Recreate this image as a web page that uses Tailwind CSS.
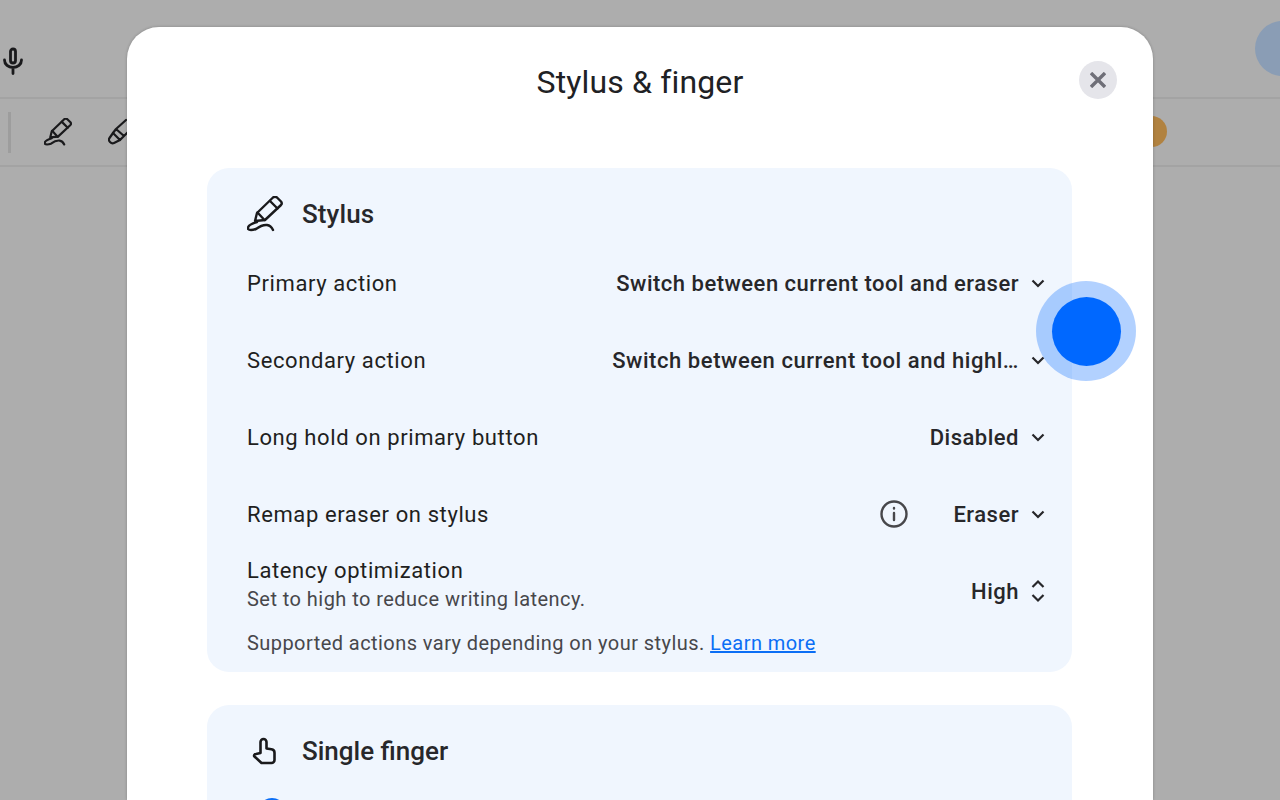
<!DOCTYPE html>
<html lang="en">

<head>
    <meta charset="UTF-8" />
    <meta name="viewport" content="width=device-width, initial-scale=1.0" />
    <title>Stylus &amp; finger</title>
    <script src="https://cdn.jsdelivr.net/npm/@tailwindcss/browser@4"></script>
</head>

<body class="bg-[#adadad] text-[#1f1f21] font-['Roboto',sans-serif] h-[800px] w-[1280px] overflow-hidden relative">

    <!-- Page behind the dialog -->
    <header class="h-[99px] border-b-2 border-[#a3a3a3] flex items-center justify-between pl-[1px] pt-[25px]">
        <svg class="w-6 h-7 text-[#1a1a1c]" viewBox="0 0 24 28" fill="none" stroke="currentColor" stroke-width="2.800" stroke-linecap="round">
            <rect x="9.500" y="2" width="5" height="14" rx="2.500"></rect>
            <path d="M3.500 13c0 4.500 3.800 7.500 8.500 7.500s8.500-3 8.500-7.500M12 20.500v6"></path>
        </svg>
        <div class="w-[55px] h-[55px] rounded-full bg-[#8a9db5] -mr-[30px] -mt-[25px]"></div>
    </header>
    <div class="h-[68px] border-b-2 border-[#a3a3a3] flex items-center justify-between">
        <div class="flex items-center">
            <div class="w-[3px] h-[41px] bg-[#9d9d9d] ml-[8px]"></div>
            <svg class="w-[28px] h-[28px] ml-[33px] text-[#1a1a1c]" viewBox="0 0 36 36" fill="none" stroke="currentColor" stroke-width="2.800" stroke-linecap="round" stroke-linejoin="round">
                <path d="M10 17L26 1.500Q28 0 30 1.500L34 5.500Q35.500 7.500 34 9L18 24L8 25Z"></path>
                <path d="M23 5L30.500 12.500M10.500 16.500L17.500 24"></path>
                <path d="M10 26Q0 29 1 33Q3 35 9 33Q15 28.500 20 29Q24 29.500 26 34"></path>
            </svg>
            <svg class="w-[28px] h-[28px] ml-[36px] text-[#1a1a1c]" viewBox="0 0 28 28" fill="none" stroke="currentColor" stroke-width="2.200" stroke-linecap="round" stroke-linejoin="round">
                <path d="M8 11L18 2M16 18L26 8M8 11L5 15L12 22L16 18Z"></path>
                <path d="M5 15L1.500 20Q0 22 2 24Q4 26 6 25L12 22"></path>
            </svg>
        </div>
        <div class="w-[31px] h-[31px] rounded-full bg-[#b18240] mr-[113px] -mt-[2px]"></div>
    </div>

    <!-- Dialog -->
    <div class="absolute left-[127px] top-[27px] w-[1026px] h-[773px] overflow-hidden bg-white rounded-t-[32px] shadow-[0_0_3px_rgba(0,0,0,0.25)] px-[80px]">
        <div class="h-[141px] flex justify-center pt-[33px] relative">
            <h1 class="text-[32px] leading-[44px] tracking-[0.15px] text-[#202124]">Stylus &amp; finger</h1>
            <button class="absolute right-[-44px] top-[34px] w-[38px] h-[38px] rounded-full bg-[#e5e5ea] flex items-center justify-center">
                <svg class="w-[16px] h-[16px] text-[#6f6f78]" viewBox="0 0 16 16" fill="none" stroke="currentColor" stroke-width="3.400">
                    <path d="M1 1l14 14M15 1L1 15"></path>
                </svg>
            </button>
        </div>

        <!-- Stylus card -->
        <section class="h-[504px] w-[865px] bg-[#f0f6fe] rounded-[22px] pl-[40px] pr-[26px] text-[22px] tracking-[0.6px]">
            <div class="h-[77px] flex items-center gap-[17px] pt-[16px]">
                <svg class="w-[36px] h-[36px] -mt-[1px] text-[#1a1a1c]" viewBox="0 0 36 36" fill="none" stroke="currentColor" stroke-width="2.400" stroke-linecap="round" stroke-linejoin="round">
                    <path d="M10 17L26 1.500Q28 0 30 1.500L34 5.500Q35.500 7.500 34 9L18 24L8 25Z"></path>
                    <path d="M23 5L30.500 12.500M10.500 16.500L17.500 24"></path>
                    <path d="M10 26Q0 29 1 33Q3 35 9 33Q15 28.500 20 29Q24 29.500 26 34"></path>
                </svg>
                <h2 class="ml-[2px] text-[26px] font-medium tracking-[0.1px] text-[#27272a]">Stylus</h2>
            </div>
            <div class="h-[77px] flex items-center justify-between">
                <span>Primary action</span>
                <span class="flex items-center gap-[11px] font-medium tracking-[0.5px] text-[#27272a]">Switch between current tool and eraser
                    <svg class="w-4 h-4 -mt-[1px]" viewBox="0 0 16 16" fill="none" stroke="currentColor" stroke-width="2.200"><path d="M2.500 5.500L8 11l5.500-5.500"></path></svg>
                </span>
            </div>
            <div class="h-[77px] flex items-center justify-between">
                <span>Secondary action</span>
                <span class="flex items-center gap-[11px] font-medium tracking-[0.56px] text-[#27272a]">Switch between current tool and highl…
                    <svg class="w-4 h-4 -mt-[1px]" viewBox="0 0 16 16" fill="none" stroke="currentColor" stroke-width="2.200"><path d="M2.500 5.500L8 11l5.500-5.500"></path></svg>
                </span>
            </div>
            <div class="h-[77px] flex items-center justify-between">
                <span>Long hold on primary button</span>
                <span class="flex items-center gap-[11px] font-medium tracking-[0.5px] text-[#27272a]">Disabled
                    <svg class="w-4 h-4 -mt-[1px]" viewBox="0 0 16 16" fill="none" stroke="currentColor" stroke-width="2.200"><path d="M2.500 5.500L8 11l5.500-5.500"></path></svg>
                </span>
            </div>
            <div class="h-[77px] flex items-center justify-between">
                <span>Remap eraser on stylus</span>
                <span class="flex items-center font-medium tracking-[0.5px] text-[#27272a]">
                    <svg class="w-[30px] h-[30px] mr-[44px] -mt-[2px] text-[#47474b]" viewBox="0 0 30 30" fill="none" stroke="currentColor" stroke-width="2.400" stroke-linecap="round">
                        <circle cx="15" cy="15" r="12.500"></circle>
                        <path d="M15 14v7M15 9v.5"></path>
                    </svg>
                    <span class="mr-[11px]">Eraser</span>
                    <svg class="w-4 h-4 -mt-[1px]" viewBox="0 0 16 16" fill="none" stroke="currentColor" stroke-width="2.200"><path d="M2.500 5.500L8 11l5.500-5.500"></path></svg>
                </span>
            </div>
            <div class="h-[77px] flex items-center justify-between">
                <div class="-mt-[14px]">
                    <div class="leading-[28px]">Latency optimization</div>
                    <div class="text-[20px] leading-[28px] tracking-[0.45px] text-[#47474b]">Set to high to reduce writing latency.</div>
                </div>
                <span class="flex items-center gap-[11px] font-medium tracking-[0.5px] text-[#27272a]">High
                    <svg class="w-4 h-[26px] -mt-[1px]" viewBox="0 0 16 26" fill="none" stroke="currentColor" stroke-width="2.200"><path d="M2.500 9L8 3.500 13.500 9M2.500 17L8 22.500 13.500 17"></path></svg>
                </span>
            </div>
            <p class="text-[20px] leading-[26px] tracking-[0.44px] text-[#47474b]">Supported actions vary depending on your stylus. <a href="#" class="text-[#0b6ef5] underline">Learn more</a></p>
        </section>

        <!-- Single finger card -->
        <section class="mt-[33px] h-[95px] overflow-hidden w-[865px] bg-[#f0f6fe] rounded-t-[22px] px-[40px]">
            <div class="h-[93px] flex items-center gap-[17px]">
                <svg class="w-[38px] h-[38px] text-[#1a1a1c]" viewBox="0 0 38 38" fill="none" stroke="currentColor" stroke-width="2.600" stroke-linecap="round" stroke-linejoin="round">
                    <path d="M13.500 20V9a3 3 0 0 1 6 0V15.500l5 .8a3.500 3.500 0 0 1 3 3.500V27a3 3 0 0 1-3 3H14.500L7.500 23.500c-1-1 0-2.500 1.500-2.500z"></path>
                </svg>
                <h2 class="text-[26px] font-medium text-[#27272a]">Single finger</h2>
            </div>
            <div class="w-[28px] h-[28px] rounded-full bg-[#0b6ef5] ml-[11px]"></div>
        </section>
    </div>

    <!-- Touch indicator -->
    <div class="absolute left-[1036px] top-[281px] w-[100px] h-[100px] rounded-full bg-[#0068ff]/30 flex items-center justify-center">
        <div class="w-[69px] h-[69px] rounded-full bg-[#0068ff]"></div>
    </div>

</body>

</html>
